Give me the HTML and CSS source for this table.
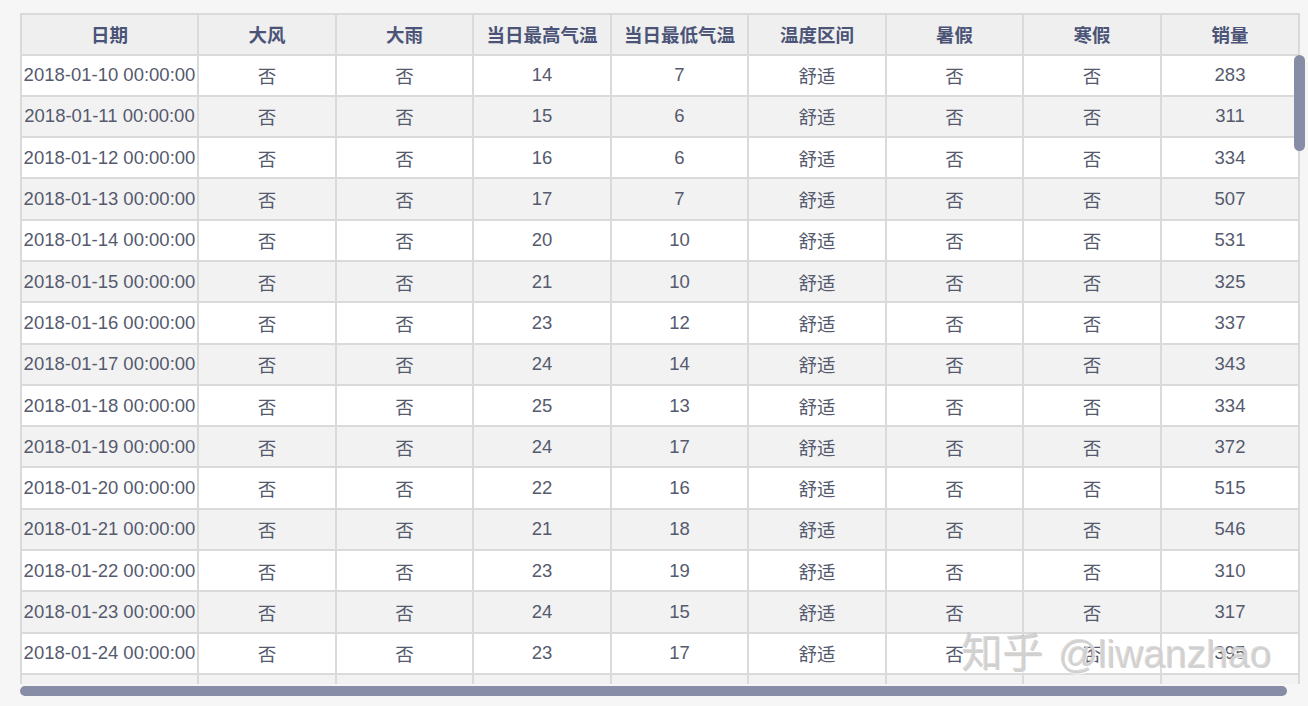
FILE: index.html
```html
<!DOCTYPE html>
<html lang="zh">
<head>
<meta charset="utf-8">
<title>销量表</title>
<link rel="stylesheet" href="styles.css">
</head>
<body>
<div class="frame">
  <div class="viewport">
    <div class="row head">
      <div class="c">日期</div><div class="c">大风</div><div class="c">大雨</div><div class="c">当日最高气温</div><div class="c">当日最低气温</div><div class="c">温度区间</div><div class="c">暑假</div><div class="c">寒假</div><div class="c">销量</div>
    </div>
    <div class="row"><div class="c">2018-01-10 00:00:00</div><div class="c">否</div><div class="c">否</div><div class="c">14</div><div class="c">7</div><div class="c">舒适</div><div class="c">否</div><div class="c">否</div><div class="c">283</div></div>
    <div class="row alt"><div class="c">2018-01-11 00:00:00</div><div class="c">否</div><div class="c">否</div><div class="c">15</div><div class="c">6</div><div class="c">舒适</div><div class="c">否</div><div class="c">否</div><div class="c">311</div></div>
    <div class="row"><div class="c">2018-01-12 00:00:00</div><div class="c">否</div><div class="c">否</div><div class="c">16</div><div class="c">6</div><div class="c">舒适</div><div class="c">否</div><div class="c">否</div><div class="c">334</div></div>
    <div class="row alt"><div class="c">2018-01-13 00:00:00</div><div class="c">否</div><div class="c">否</div><div class="c">17</div><div class="c">7</div><div class="c">舒适</div><div class="c">否</div><div class="c">否</div><div class="c">507</div></div>
    <div class="row"><div class="c">2018-01-14 00:00:00</div><div class="c">否</div><div class="c">否</div><div class="c">20</div><div class="c">10</div><div class="c">舒适</div><div class="c">否</div><div class="c">否</div><div class="c">531</div></div>
    <div class="row alt"><div class="c">2018-01-15 00:00:00</div><div class="c">否</div><div class="c">否</div><div class="c">21</div><div class="c">10</div><div class="c">舒适</div><div class="c">否</div><div class="c">否</div><div class="c">325</div></div>
    <div class="row"><div class="c">2018-01-16 00:00:00</div><div class="c">否</div><div class="c">否</div><div class="c">23</div><div class="c">12</div><div class="c">舒适</div><div class="c">否</div><div class="c">否</div><div class="c">337</div></div>
    <div class="row alt"><div class="c">2018-01-17 00:00:00</div><div class="c">否</div><div class="c">否</div><div class="c">24</div><div class="c">14</div><div class="c">舒适</div><div class="c">否</div><div class="c">否</div><div class="c">343</div></div>
    <div class="row"><div class="c">2018-01-18 00:00:00</div><div class="c">否</div><div class="c">否</div><div class="c">25</div><div class="c">13</div><div class="c">舒适</div><div class="c">否</div><div class="c">否</div><div class="c">334</div></div>
    <div class="row alt"><div class="c">2018-01-19 00:00:00</div><div class="c">否</div><div class="c">否</div><div class="c">24</div><div class="c">17</div><div class="c">舒适</div><div class="c">否</div><div class="c">否</div><div class="c">372</div></div>
    <div class="row"><div class="c">2018-01-20 00:00:00</div><div class="c">否</div><div class="c">否</div><div class="c">22</div><div class="c">16</div><div class="c">舒适</div><div class="c">否</div><div class="c">否</div><div class="c">515</div></div>
    <div class="row alt"><div class="c">2018-01-21 00:00:00</div><div class="c">否</div><div class="c">否</div><div class="c">21</div><div class="c">18</div><div class="c">舒适</div><div class="c">否</div><div class="c">否</div><div class="c">546</div></div>
    <div class="row"><div class="c">2018-01-22 00:00:00</div><div class="c">否</div><div class="c">否</div><div class="c">23</div><div class="c">19</div><div class="c">舒适</div><div class="c">否</div><div class="c">否</div><div class="c">310</div></div>
    <div class="row alt"><div class="c">2018-01-23 00:00:00</div><div class="c">否</div><div class="c">否</div><div class="c">24</div><div class="c">15</div><div class="c">舒适</div><div class="c">否</div><div class="c">否</div><div class="c">317</div></div>
    <div class="row"><div class="c">2018-01-24 00:00:00</div><div class="c">否</div><div class="c">否</div><div class="c">23</div><div class="c">17</div><div class="c">舒适</div><div class="c">否</div><div class="c">否</div><div class="c">395</div></div>
    <div class="row alt"><div class="c">2018-01-25 00:00:00</div><div class="c">否</div><div class="c">否</div><div class="c">22</div><div class="c">15</div><div class="c">舒适</div><div class="c">否</div><div class="c">否</div><div class="c">402</div></div>
  </div>
  <div class="vthumb"></div>
  <div class="hthumb"></div>
  <div class="watermark"><span class="wm-cjk">知乎</span> @liwanzhao</div>
</div>
</body>
</html>
```
FILE: styles.css
```css
html, body {
  margin: 0;
  padding: 0;
  background: #f6f6f6;
}
body {
  font-family: "Liberation Sans", Arial, "Noto Sans CJK SC", sans-serif;
  font-size: 18.5px;
  color: #555a6e;
}
.frame {
  position: relative;
  width: 1288px;
  height: 693px;
  margin: 13px 0 0 20px;
}
.viewport {
  width: 1280px;
  height: 671px;
  overflow: hidden;
  border-top: 2px solid #dadada;
  border-left: 2px solid #dadada;
  box-sizing: border-box;
}
.row {
  display: grid;
  grid-template-columns: 177px 138px 137px 138px 137px 138px 137px 138px 138px;
  height: 41.3px;
  background: #ffffff;
}
.row.alt {
  background: #f2f2f2;
}
.row.head {
  height: 40.5px;
  background: #efefef;
  color: #4b5477;
  font-weight: bold;
}
.c {
  display: flex;
  align-items: center;
  justify-content: center;
  border-right: 2px solid #dadada;
  border-bottom: 2px solid #dadada;
  box-sizing: border-box;
  white-space: nowrap;
  overflow: hidden;
}
.vthumb {
  position: absolute;
  left: 1274px;
  top: 42px;
  width: 11px;
  height: 96px;
  border-radius: 6px;
  background: #878da6;
}
.hthumb {
  position: absolute;
  left: 0;
  top: 673px;
  width: 1267px;
  height: 10px;
  border-radius: 5px;
  background: #878da6;
}
.watermark {
  position: absolute;
  left: 942px;
  top: 617px;
  font-family: "Liberation Sans", "Noto Sans CJK SC", sans-serif;
  font-size: 39px;
  line-height: 48px;
  color: rgba(170, 170, 170, 0.55);
  text-shadow: 0 0 1px #ffffff, 1px 1px 0 rgba(255,255,255,0.8), -1px -1px 0 rgba(140,140,140,0.35);
  white-space: nowrap;
  pointer-events: none;
}
.wm-cjk {
  font-size: 41px;
  margin-right: 4px;
}
```
